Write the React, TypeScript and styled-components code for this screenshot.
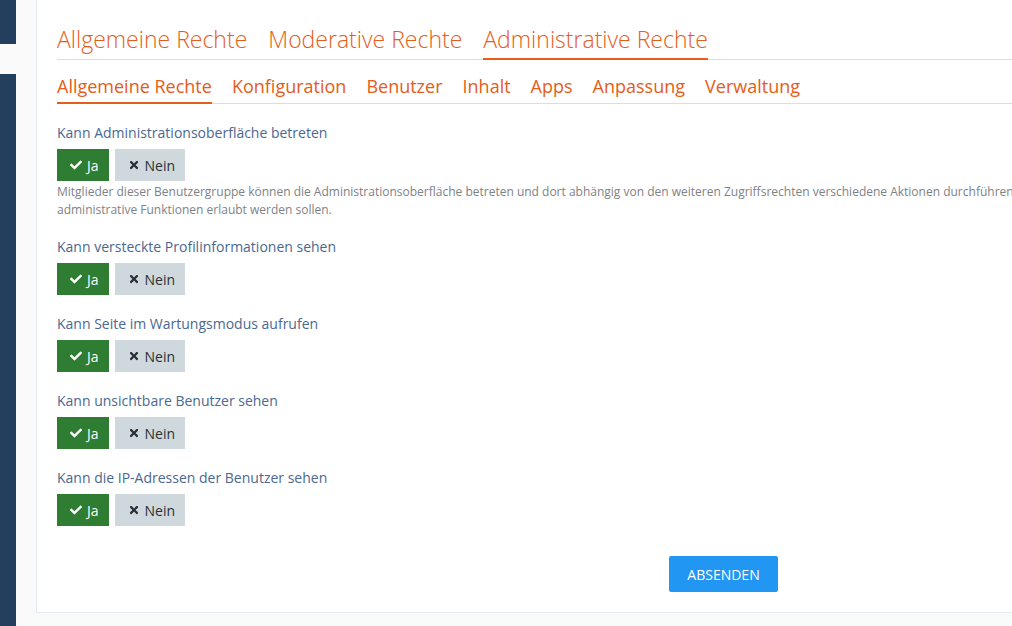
import React from "react";
import styled, { createGlobalStyle } from "styled-components";
import { FaCheck, FaTimes } from "react-icons/fa";

const GlobalStyle = createGlobalStyle`
  html, body {
    margin: 0;
    padding: 0;
    background: #fafafa;
    overflow: hidden;
    font-family: "Open Sans", "Noto Sans", sans-serif;
  }
`;

const Page = styled.div`
  display: flex;
  align-items: flex-start;
  min-height: 626px;
`;

const Sidebar = styled.nav`
  width: 16px;
  flex-shrink: 0;
  display: flex;
  flex-direction: column;
  align-self: stretch;
`;

const SideBlock = styled.div<{ $h?: number; $light?: boolean }>`
  height: ${(p) => (p.$h ? `${p.$h}px` : "auto")};
  flex: ${(p) => (p.$h ? "0 0 auto" : "1")};
  background: ${(p) => (p.$light ? "#fafafa" : "#243f5d")};
`;

const Card = styled.main`
  margin-left: 20px;
  width: 1333px;
  flex-shrink: 0;
  background: #fff;
  border-left: 1px solid #e6ebf1;
  border-bottom: 1px solid #e6ebf1;
  padding: 21px 20px 20px 20px;
`;

const TopTabs = styled.div`
  display: flex;
  gap: 21px;
  border-bottom: 1px solid #dddddd;
`;

const TopTab = styled.a<{ $active?: boolean }>`
  font-size: 23px;
  font-weight: 300;
  line-height: 36px;
  color: #e65c19;
  padding-bottom: 1px;
  margin-bottom: -1px;
  border-bottom: 2px solid ${(p) => (p.$active ? "#e65c19" : "transparent")};
  text-decoration: none;
  cursor: pointer;
`;

const SubTabs = styled.div`
  display: flex;
  gap: 20px;
  margin-top: 13px;
  border-bottom: 1px solid #dddddd;
`;

const SubTab = styled.a<{ $active?: boolean }>`
  font-size: 18px;
  font-weight: 400;
  line-height: 27px;
  color: #e65c19;
  padding-bottom: 2px;
  margin-bottom: -1px;
  border-bottom: 2px solid ${(p) => (p.$active ? "#e65c19" : "transparent")};
  text-decoration: none;
  cursor: pointer;
`;

const Form = styled.div`
  padding-top: 19px;
`;

const Section = styled.section`
  margin-bottom: 19px;
`;

const Label = styled.div`
  font-size: 14px;
  line-height: 20px;
  color: #4a6891;
  margin-bottom: 6px;
`;

const Toggle = styled.div`
  display: flex;
  gap: 6px;
`;

const ToggleButton = styled.button<{ $on?: boolean }>`
  display: inline-flex;
  align-items: center;
  gap: 5px;
  height: 32px;
  padding: 0 10px 0 13px;
  border: 0;
  border-radius: 0;
  font-family: inherit;
  font-size: 14px;
  background: ${(p) => (p.$on ? "#2e7d32" : "#cfd8dc")};
  color: ${(p) => (p.$on ? "#ffffff" : "#263238")};
  cursor: pointer;

  svg {
    width: 12px;
    height: 12px;
  }
`;

const Help = styled.p`
  margin: 2px 0 -1px;
  font-size: 12px;
  line-height: 18px;
  color: #7d8287;
  white-space: nowrap;
`;

const Submit = styled.div`
  display: flex;
  justify-content: center;
  margin-top: 30px;
`;

const SubmitButton = styled.button`
  height: 36px;
  padding: 0 18px;
  background: #2196f3;
  color: #fff;
  border: 0;
  border-radius: 2px;
  font-family: inherit;
  font-size: 14px;
  text-transform: uppercase;
  cursor: pointer;
`;

const permissions = [
  {
    label: "Kann Administrationsoberfläche betreten",
    help: [
      "Mitglieder dieser Benutzergruppe können die Administrationsoberfläche betreten und dort abhängig von den weiteren Zugriffsrechten verschiedene Aktionen durchführen. Diese Berechtigung sollte nur vergeben werden, wenn der Benutzergruppe auch weitere",
      "administrative Funktionen erlaubt werden sollen.",
    ],
  },
  { label: "Kann versteckte Profilinformationen sehen" },
  { label: "Kann Seite im Wartungsmodus aufrufen" },
  { label: "Kann unsichtbare Benutzer sehen" },
  { label: "Kann die IP-Adressen der Benutzer sehen" },
];

const topTabs = ["Allgemeine Rechte", "Moderative Rechte", "Administrative Rechte"];
const subTabs = ["Allgemeine Rechte", "Konfiguration", "Benutzer", "Inhalt", "Apps", "Anpassung", "Verwaltung"];

const App: React.FC = () => {
  return (
    <>
      <GlobalStyle />
      <Page>
        <Sidebar>
          <SideBlock $h={44} />
          <SideBlock $h={30} $light />
          <SideBlock />
        </Sidebar>
        <Card>
          <TopTabs>
            {topTabs.map((t, i) => (
              <TopTab key={t} $active={i === 2}>
                {t}
              </TopTab>
            ))}
          </TopTabs>
          <SubTabs>
            {subTabs.map((t, i) => (
              <SubTab key={t} $active={i === 0}>
                {t}
              </SubTab>
            ))}
          </SubTabs>
          <Form>
            {permissions.map((p) => (
              <Section key={p.label}>
                <Label>{p.label}</Label>
                <Toggle>
                  <ToggleButton $on>
                    <FaCheck />
                    Ja
                  </ToggleButton>
                  <ToggleButton>
                    <FaTimes />
                    Nein
                  </ToggleButton>
                </Toggle>
                {p.help && (
                  <Help>
                    {p.help[0]}
                    <br />
                    {p.help[1]}
                  </Help>
                )}
              </Section>
            ))}
            <Submit>
              <SubmitButton>Absenden</SubmitButton>
            </Submit>
          </Form>
        </Card>
      </Page>
    </>
  );
};

export default App;
